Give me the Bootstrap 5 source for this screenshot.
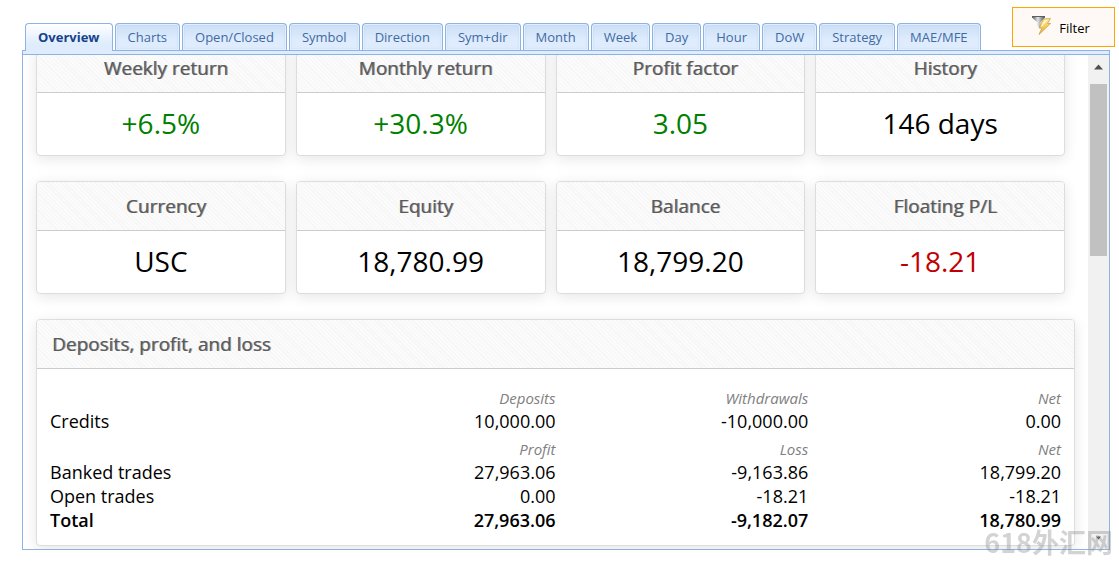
<!DOCTYPE html>
<html lang="en">
<head>
<meta charset="utf-8">
<meta name="viewport" content="width=device-width, initial-scale=1">
<title>Account overview</title>
<link href="https://cdn.jsdelivr.net/npm/bootstrap@5.3.0/dist/css/bootstrap.min.css" rel="stylesheet">
<style>
  body { font-family: "Open Sans", "Noto Sans CJK SC", sans-serif; color: #000; background: #fff; }
  .page-shell { padding-bottom: 14px; }
  .top-bar { padding: 7px 4px 0 25px; }

  /* Tabs */
  .view-tabs { --bs-nav-tabs-border-width: 0; border: 0; gap: 0 2px; position: relative; z-index: 1; }
  .view-tabs .nav-link {
    height: 27px; padding: 0 12px; margin: 0; font-size: 13px; line-height: 26px; color: #416aa3;
    border: 1px solid #8db2e3; border-bottom: 0; border-radius: 4px 4px 0 0; white-space: nowrap;
    background: linear-gradient(#cbdef6, #deecfd 60%); box-shadow: inset 0 0 0 1px #e4effc, inset 0 0 3px #a9c7ee;
  }
  .view-tabs .nav-link.active {
    height: 28px; margin-bottom: -1px; font-weight: 700; color: #15428b; border-color: #8db2e3;
    background: linear-gradient(#fff, #deecfd 75%); box-shadow: inset 0 1px 0 #fff;
  }
  .filter-btn {
    height: 40px; width: 103px; margin-bottom: 3px; padding: 3px 6px 0 0; font-size: 13px; color: #000;
    background: #fff9f5; border: 1px solid #ffa500; border-radius: 0;
  }
  .filter-btn:hover { color: #000; background: #fff1e4; border-color: #ffa500; }
  .filter-btn svg { margin-bottom: 8px; }

  /* Panel */
  .view-panel { margin: 0 9px 0 22px; border: 1px solid #8db2e3; min-height: 0; }
  .panel-strip { height: 4px; background: #deecfd; border-bottom: 1px solid #8db2e3; }
  .panel-view { min-height: 0; }
  .panel-scroll { overflow: hidden; min-width: 0; }
  .panel-content { margin-top: -12px; padding: 0 13px; }
  .tile-row { display: grid; grid-template-columns: repeat(4, 1fr); }
  .tile-row .card { margin-right: 10px; }
  .stat-card { border: 1px solid #ddd; border-radius: 4px; margin-bottom: 25px; box-shadow: 0 3px 14px rgba(0,0,0,.1); }
  .stat-card .card-header {
    height: 49px; padding: 0 5px 0 15px; font-size: 19px; line-height: 49px; color: #5a5a5a;
    text-shadow: 1px 0 0 rgba(90,90,90,.6);
    border-bottom: 1px solid #ccc; border-radius: 3px 3px 0 0;
    background: repeating-linear-gradient(45deg, #fbfbfb 0 2px, #f6f6f6 2px 3px);
  }
  .stat-value { height: 62px; padding: 0; font-size: 28px; line-height: 60px; text-align: center; }
  .gain { color: #008000; }
  .drop { color: #c00000; }
  .money-body { padding: 13px; }
  .money-table { width: 100%; table-layout: fixed; font-size: 18px; line-height: 24px; }
  .money-table td, .money-table th { padding: 0; text-align: right; font-weight: 400; }
  .money-table th[scope=row] { text-align: left; }
  .money-table .caption-line > * { font-size: 15px; font-style: italic; line-height: 21px; padding-top: 6px; color: #808080; }
  .money-table .sum-line > * { font-weight: 600; }

  /* Scroll bar */
  .side-bar { width: 21px; background: #f1f1f1; padding: 0 2px; flex: none; }
  .side-bar svg { display: block; height: 29px; width: 17px; }
  .side-thumb { height: 172px; background: #c1c1c1; }

  .site-mark { position: fixed; right: 6px; bottom: 9px; font-family: "Noto Sans CJK SC", sans-serif; font-size: 27px; line-height: 27px; font-weight: 700; color: #8c8c8c; opacity: .38; pointer-events: none; }
</style>
</head>
<body>
<div class="page-shell vh-100 d-flex flex-column">
  <header class="top-bar d-flex justify-content-between align-items-end">
    <nav class="nav nav-tabs view-tabs flex-nowrap align-items-end">
      <a class="nav-link active" aria-current="page" href="#overview">Overview</a>
      <a class="nav-link" href="#charts">Charts</a>
      <a class="nav-link" href="#open-closed">Open/Closed</a>
      <a class="nav-link" href="#symbol">Symbol</a>
      <a class="nav-link" href="#direction">Direction</a>
      <a class="nav-link" href="#sym-dir">Sym+dir</a>
      <a class="nav-link" href="#month">Month</a>
      <a class="nav-link" href="#week">Week</a>
      <a class="nav-link" href="#day">Day</a>
      <a class="nav-link" href="#hour">Hour</a>
      <a class="nav-link" href="#dow">DoW</a>
      <a class="nav-link" href="#strategy">Strategy</a>
      <a class="nav-link" href="#mae-mfe">MAE/MFE</a>
    </nav>
    <button type="button" class="btn filter-btn d-flex align-items-center justify-content-center gap-2">
      <svg width="20" height="20" viewBox="0 0 20 20" aria-hidden="true">
        <defs>
          <linearGradient id="funnel"><stop offset="0" stop-color="#4c4f50"/><stop offset=".45" stop-color="#e2e4e4"/><stop offset="1" stop-color="#4a4d4e"/></linearGradient>
          <linearGradient id="bolt" x2="0" y2="1"><stop offset="0" stop-color="#ffe98a"/><stop offset="1" stop-color="#e9b22c"/></linearGradient>
        </defs>
        <path d="M1 1h13v1.500L9.500 7.500v6L6.500 11V7.500L1 2.500z" fill="url(#funnel)"/>
        <path d="M1 1h13v1H1z" fill="#5b5e5f"/>
        <path d="M12.500 4 19.500 3.500 16.500 8.500h3L8 19.500l3-6.500H8z" fill="url(#bolt)" stroke="#c9a050" stroke-width=".8"/>
        <path d="M13.300 5 17 4.800 11 11.500H9.800z" fill="#fff6c4"/>
      </svg>
      <span>Filter</span>
    </button>
  </header>

  <main class="view-panel flex-grow-1 d-flex flex-column">
    <div class="panel-strip flex-shrink-0"></div>
    <div class="panel-view d-flex flex-grow-1">
      <div class="panel-scroll flex-grow-1">
        <div class="panel-content">
          <section class="tile-row text-center">
            <div class="card stat-card"><div class="card-header">Weekly return</div><div class="card-body stat-value gain">+6.5%</div></div>
            <div class="card stat-card"><div class="card-header">Monthly return</div><div class="card-body stat-value gain">+30.3%</div></div>
            <div class="card stat-card"><div class="card-header">Profit factor</div><div class="card-body stat-value gain">3.05</div></div>
            <div class="card stat-card"><div class="card-header">History</div><div class="card-body stat-value">146 days</div></div>
            <div class="card stat-card"><div class="card-header">Currency</div><div class="card-body stat-value">USC</div></div>
            <div class="card stat-card"><div class="card-header">Equity</div><div class="card-body stat-value">18,780.99</div></div>
            <div class="card stat-card"><div class="card-header">Balance</div><div class="card-body stat-value">18,799.20</div></div>
            <div class="card stat-card"><div class="card-header">Floating P/L</div><div class="card-body stat-value drop">-18.21</div></div>
          </section>
          <section class="card stat-card">
            <div class="card-header">Deposits, profit, and loss</div>
            <div class="card-body money-body">
              <table class="money-table">
                <tbody>
                  <tr class="caption-line"><td></td><th scope="col">Deposits</th><th scope="col">Withdrawals</th><th scope="col">Net</th></tr>
                  <tr><th scope="row">Credits</th><td>10,000.00</td><td>-10,000.00</td><td>0.00</td></tr>
                  <tr class="caption-line"><td></td><th scope="col">Profit</th><th scope="col">Loss</th><th scope="col">Net</th></tr>
                  <tr><th scope="row">Banked trades</th><td>27,963.06</td><td>-9,163.86</td><td>18,799.20</td></tr>
                  <tr><th scope="row">Open trades</th><td>0.00</td><td>-18.21</td><td>-18.21</td></tr>
                  <tr class="sum-line"><th scope="row">Total</th><td>27,963.06</td><td>-9,182.07</td><td>18,780.99</td></tr>
                </tbody>
              </table>
            </div>
          </section>
        </div>
      </div>
      <div class="side-bar d-flex flex-column" aria-hidden="true">
        <svg viewBox="0 0 17 29"><path d="M4 14.500 8.500 9.500 13 14.500z" fill="#505050"/></svg>
        <div class="side-thumb"></div>
        <svg class="mt-auto" viewBox="0 0 17 29"><path d="M6 16.500 8.500 19.500 11 16.500z" fill="#505050"/></svg>
      </div>
    </div>
  </main>
</div>
<div class="site-mark">618外汇网</div>
<script src="https://cdn.jsdelivr.net/npm/bootstrap@5.3.0/dist/js/bootstrap.bundle.min.js"></script>
</body>
</html>
